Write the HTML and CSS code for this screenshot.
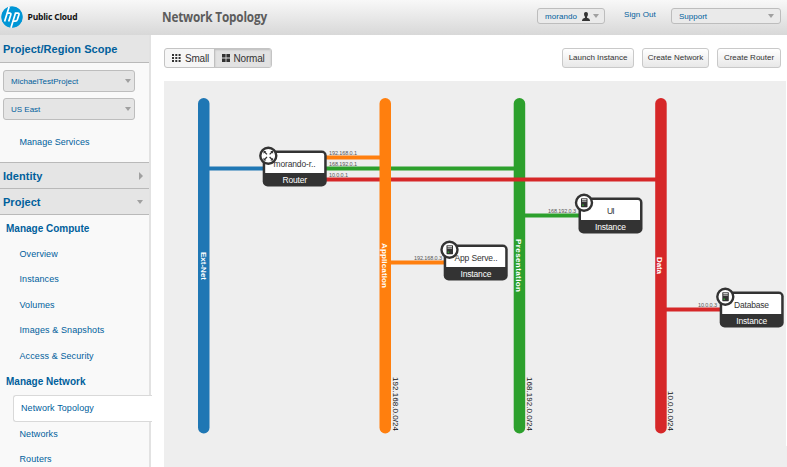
FILE: index.html
```html
<!DOCTYPE html>
<html lang="en">
<head>
<meta charset="utf-8">
<title>Network Topology</title>
<link rel="stylesheet" href="styles.css">
</head>
<body>
<header class="topbar">
  <div class="brand">
    <svg class="logo" viewBox="0 0 22 22" width="22" height="22">
      <circle cx="11" cy="11" r="10.8" fill="#0096d6"/>
      <g fill="none" stroke="#fff" stroke-width="1.7">
        <path d="M8.2 0.5L3.6 15.6M6.3 7.1H8.6Q10.3 7.1 9.8 8.7L7.7 15.6"/>
        <path d="M9.9 22L14.5 7.1H16.9Q18.4 7.1 17.9 8.7L16.3 13.8Q15.8 15.1 14.4 15.1H12"/>
      </g>
    </svg>
    <span class="brand-name">Public Cloud</span>
  </div>
  <h1 class="title">Network Topology</h1>
  <div class="user-select"><span>morando</span>
    <svg class="person" width="8" height="9" viewBox="0 0 8 9"><path fill="#333" d="M4 0C5.6 0 6.1 1.1 5.9 2.7Q5.7 4.2 5 4.8V5.7Q8 6.4 8 8.5V9H0V8.5Q0 6.4 3 5.7V4.8Q2.3 4.2 2.1 2.7C1.9 1.1 2.4 0 4 0Z"/></svg>
    <i class="arrow"></i>
  </div>
  <a class="signout">Sign Out</a>
  <div class="support-select"><span>Support</span><i class="arrow"></i></div>
</header>
<div class="body">
  <nav class="sidebar">
    <h2 class="section scope">Project/Region Scope</h2>
    <div class="scope-panel">
      <div class="select project-name"><span>MichaelTestProject</span><i class="arrow"></i></div>
      <div class="select"><span>US East</span><i class="arrow"></i></div>
      <a class="manage">Manage Services</a>
    </div>
    <h2 class="section">Identity<i class="arrow-right"></i></h2>
    <h2 class="section">Project<i class="arrow"></i></h2>
    <div class="menu">
      <h3 class="group">Manage Compute</h3>
      <a class="item">Overview</a>
      <a class="item">Instances</a>
      <a class="item">Volumes</a>
      <a class="item">Images &amp; Snapshots</a>
      <a class="item">Access &amp; Security</a>
      <h3 class="group">Manage Network</h3>
      <a class="item active">Network Topology</a>
      <a class="item">Networks</a>
      <a class="item">Routers</a>
    </div>
  </nav>
  <main class="content">
    <div class="toolbar">
      <div class="toggle">
        <span class="size"><svg width="9" height="8" viewBox="0 0 9 8"><path stroke="#333" stroke-width="2" stroke-dasharray="2 1.3" d="M0 1H9M0 4H9M0 7H9"/></svg>Small</span>
        <span class="size on"><svg width="8" height="8" viewBox="0 0 8 8"><path fill="#333" d="M0 0H3.6V3.6H0ZM4.4 0H8V3.6H4.4ZM0 4.4H3.6V8H0ZM4.4 4.4H8V8H4.4Z"/></svg>Normal</span>
      </div>
      <div class="actions">
        <span class="button launch">Launch Instance</span>
        <span class="button network">Create Network</span>
        <span class="button router">Create Router</span>
      </div>
    </div>
    <svg class="topology" viewBox="164 81 623 386" width="623" height="386">
      <defs>
        <g id="device">
          <rect width="64" height="36" rx="5" fill="#333"/>
          <path d="M2.500 4.500Q2.500 2.500 4.500 2.500H59.500Q61.500 2.500 61.500 4.500V22.500H2.500Z" fill="#fff"/>
        </g>
        <g id="server">
          <circle r="8" fill="#fff" stroke="#333" stroke-width="2.400"/>
          <rect x="-3" y="-4.500" width="6.500" height="9" rx=".6" fill="#333"/>
          <path d="M-2 -3.300H2.500M-2 -1.600H2.500" stroke="#ddd"/>
          <rect x="-1.800" y="1.800" width="1.500" height="1.500" fill="#2ca02c"/>
        </g>
      </defs>
      <path d="M786.500 81V446" stroke="#fff"/>
      <g stroke-width="4">
        <path d="M204 168.500H265" stroke="#1f77b4"/>
        <path d="M325 157.500H385M385 262.500H446" stroke="#ff7f0e"/>
      </g>
      <rect x="198" y="98" width="11.500" height="335.500" rx="5.700" fill="#1f77b4"/>
      <rect x="513.700" y="98" width="11.500" height="335.500" rx="5.700" fill="#2ca02c"/>
      <rect x="655.200" y="98" width="11.500" height="335.500" rx="5.700" fill="#d62728"/>
      <g stroke-width="4">
        <path d="M325 168.500H519M519 215.500H580" stroke="#2ca02c"/>
        <path d="M325 179.500H661M661 309.500H722" stroke="#d62728"/>
      </g>
      <rect x="379.500" y="98" width="11.500" height="335.500" rx="5.700" fill="#ff7f0e"/>
      <g class="net-name">
        <text transform="translate(200.500 252) rotate(90)" textLength="28">Ext-Net</text>
        <text transform="translate(381.500 243) rotate(90)" textLength="45">Application</text>
        <text transform="translate(516 239) rotate(90)" textLength="53">Presentation</text>
        <text transform="translate(657 257) rotate(90)" textLength="17">Data</text>
      </g>
      <g class="cidr">
        <text transform="translate(392.500 377) rotate(90)" textLength="54">192.168.0.0/24</text>
        <text transform="translate(527 377) rotate(90)" textLength="54">168.192.0.0/24</text>
        <text transform="translate(667.500 391) rotate(90)" textLength="40">10.0.0.0/24</text>
      </g>
      <g class="ip">
        <text x="329" y="155" textLength="28">192.168.0.1</text>
        <text x="329" y="165.500" textLength="28">168.192.0.1</text>
        <text x="329" y="176.500" textLength="19">10.0.0.1</text>
        <text x="414" y="259.500" textLength="28">192.168.0.3</text>
        <text x="548" y="213" textLength="28">168.192.0.3</text>
        <text x="698" y="306.500" textLength="19">10.0.0.3</text>
      </g>
      <use href="#device" x="262.700" y="150.500"/>
      <use href="#device" x="443.700" y="244.500"/>
      <use href="#device" x="578.500" y="197.500"/>
      <use href="#device" x="719.700" y="291.500"/>
      <g class="node">
        <text x="273.500" y="166.500" textLength="42">morando-r..</text>
        <text x="454.500" y="260.500" textLength="43">App Serve..</text>
        <text x="607" y="214" textLength="7.500">UI</text>
        <text x="734" y="307.500" textLength="35">Database</text>
        <g fill="#fff">
          <text x="282.500" y="182.500" textLength="24.500">Router</text>
          <text x="460.500" y="277" textLength="31">Instance</text>
          <text x="595" y="229.500" textLength="31">Instance</text>
          <text x="736.200" y="324" textLength="31">Instance</text>
        </g>
      </g>
      <circle cx="268.300" cy="155.700" r="8" fill="#fff" stroke="#333" stroke-width="2.400"/>
      <g transform="translate(268.300 155.700)">
        <path d="M-4 -4L-1.300 -1.300M4 -4L1.300 -1.300M-4 4L-1.300 1.300M4 4L1.300 1.300" stroke="#333" stroke-width="1.300"/>
        <path d="M-4.800 -4.800H-2L-4.800 -2ZM4.800 -4.800H2L4.800 -2ZM-4.800 4.800H-2L-4.800 2ZM4.800 4.800H2L4.800 2Z" fill="#333"/>
      </g>
      <use href="#server" x="449.500" y="249.700"/>
      <use href="#server" x="584" y="202.700"/>
      <use href="#server" x="725.300" y="296.700"/>
    </svg>
  </main>
</div>
</body>
</html>
```
FILE: styles.css
```css
* { box-sizing: border-box; }
body { margin: 0; width: 787px; height: 467px; overflow: hidden; background: #fff; color: #333; font-family: "Liberation Sans", Arial, sans-serif; }
h1, h2, h3 { margin: 0; }
.topbar { display: flex; height: 35px; background: linear-gradient(#f8f8f8, #d8d8d8); }
.brand { display: flex; width: 162px; padding: 6px 0 0 1px; }
.logo { flex: none; overflow: hidden; border-radius: 50%; }
.brand-name { margin: 5px 0 0 4.500px; color: #111; font: bold 8.500px/12px "Open Sans", sans-serif; letter-spacing: -.2px; white-space: nowrap; }
.title { flex: none; width: 375px; padding-top: 7px; color: #5c5c5c; font: bold 14px/20px "Open Sans", sans-serif; letter-spacing: -.2px; white-space: nowrap; transform: scaleX(.84); transform-origin: left; }
.user-select, .support-select, .select { display: flex; align-items: center; border: 1px solid #bdbdbd; border-radius: 3px; color: #00609c; font-size: 8px; }
.user-select { width: 68px; height: 16px; margin-top: 8px; padding: 0 5px 0 7px; background: #eaeaea; }
.user-select span { letter-spacing: .05px; }
.person { margin: 0 3px 0 auto; }
.arrow { width: 0; height: 0; border: 3.500px solid transparent; border-top: 4px solid #a0a0a0; border-bottom: 0; }
.arrow-right { width: 0; height: 0; border: 4px solid transparent; border-left: 4.500px solid #a0a0a0; border-right: 0; }
.signout { margin: 9px 0 0 19px; width: 47px; color: #00609c; font-size: 8px; line-height: 11px; letter-spacing: .1px; white-space: nowrap; }
.support-select { width: 110px; height: 16px; margin-top: 8px; padding: 0 6px 0 7px; background: #eaeaea; justify-content: space-between; }
.body { display: flex; height: 432px; }
.sidebar { flex: none; width: 151px; border-right: 2px solid #e2e2e2; background: #f9f9f9; color: #00609c; }
.section { display: flex; justify-content: space-between; align-items: center; height: 26px; padding: 0 6px 0 3px; border-bottom: 1px solid #b9b9b9; background: #e5e5e5; font-size: 11px; letter-spacing: .03px; }
.scope { height: 28px; }
.scope-panel { height: 100px; padding: 7px 0 0 3px; border-bottom: 1px solid #b9b9b9; }
.select { width: 132px; height: 22px; margin-bottom: 6px; padding: 0 3px 0 7px; background: #e5e5e5; justify-content: space-between; }
.manage { display: block; padding: 10px 0 0 16.500px; font-size: 9px; line-height: 12px; letter-spacing: .03px; }
.menu { padding-top: 1px; }
.group { height: 25.500px; padding-left: 6px; font-size: 10px; line-height: 26px; }
.item { display: block; height: 25.500px; padding-left: 19.500px; font-size: 9px; line-height: 24px; letter-spacing: .1px; }
.active { position: relative; width: 139px; height: 27px; margin-left: 13px; padding-left: 7px; border: 1px solid #d9d9d9; border-right: 0; border-radius: 3px 0 0 3px; background: #fff; }
.content { width: 636px; padding: 13px 0 0 13px; }
.toolbar { display: flex; justify-content: space-between; height: 33px; padding-right: 6px; }
.toggle { display: flex; width: 108px; height: 20px; border: 1px solid #c4c4c4; border-radius: 3px; background: #f6f6f6; overflow: hidden; }
.size { display: flex; align-items: center; width: 49px; padding-left: 7px; gap: 4px; font-size: 10px; letter-spacing: -.2px; }
.on { width: 58px; border-left: 1px solid #c0c0c0; background: #e2e2e2; box-shadow: inset 0 1px 2px #bbb; }
.actions { display: flex; gap: 8px; }
.button { height: 20px; border: 1px solid #c9c9c9; border-radius: 3px; background: linear-gradient(#fff, #e8e8e8); font-size: 8px; line-height: 18px; text-align: center; white-space: nowrap; }
.launch { width: 72px; }
.network { width: 67px; }
.router { width: 64px; }
.topology { display: block; background: #eee; }
.net-name { fill: #fff; font-size: 8px; font-weight: bold; }
.cidr { fill: #111; font-size: 8px; }
.ip { fill: #555; font-size: 5.500px; }
.node { fill: #333; font-size: 8.500px; }
```
